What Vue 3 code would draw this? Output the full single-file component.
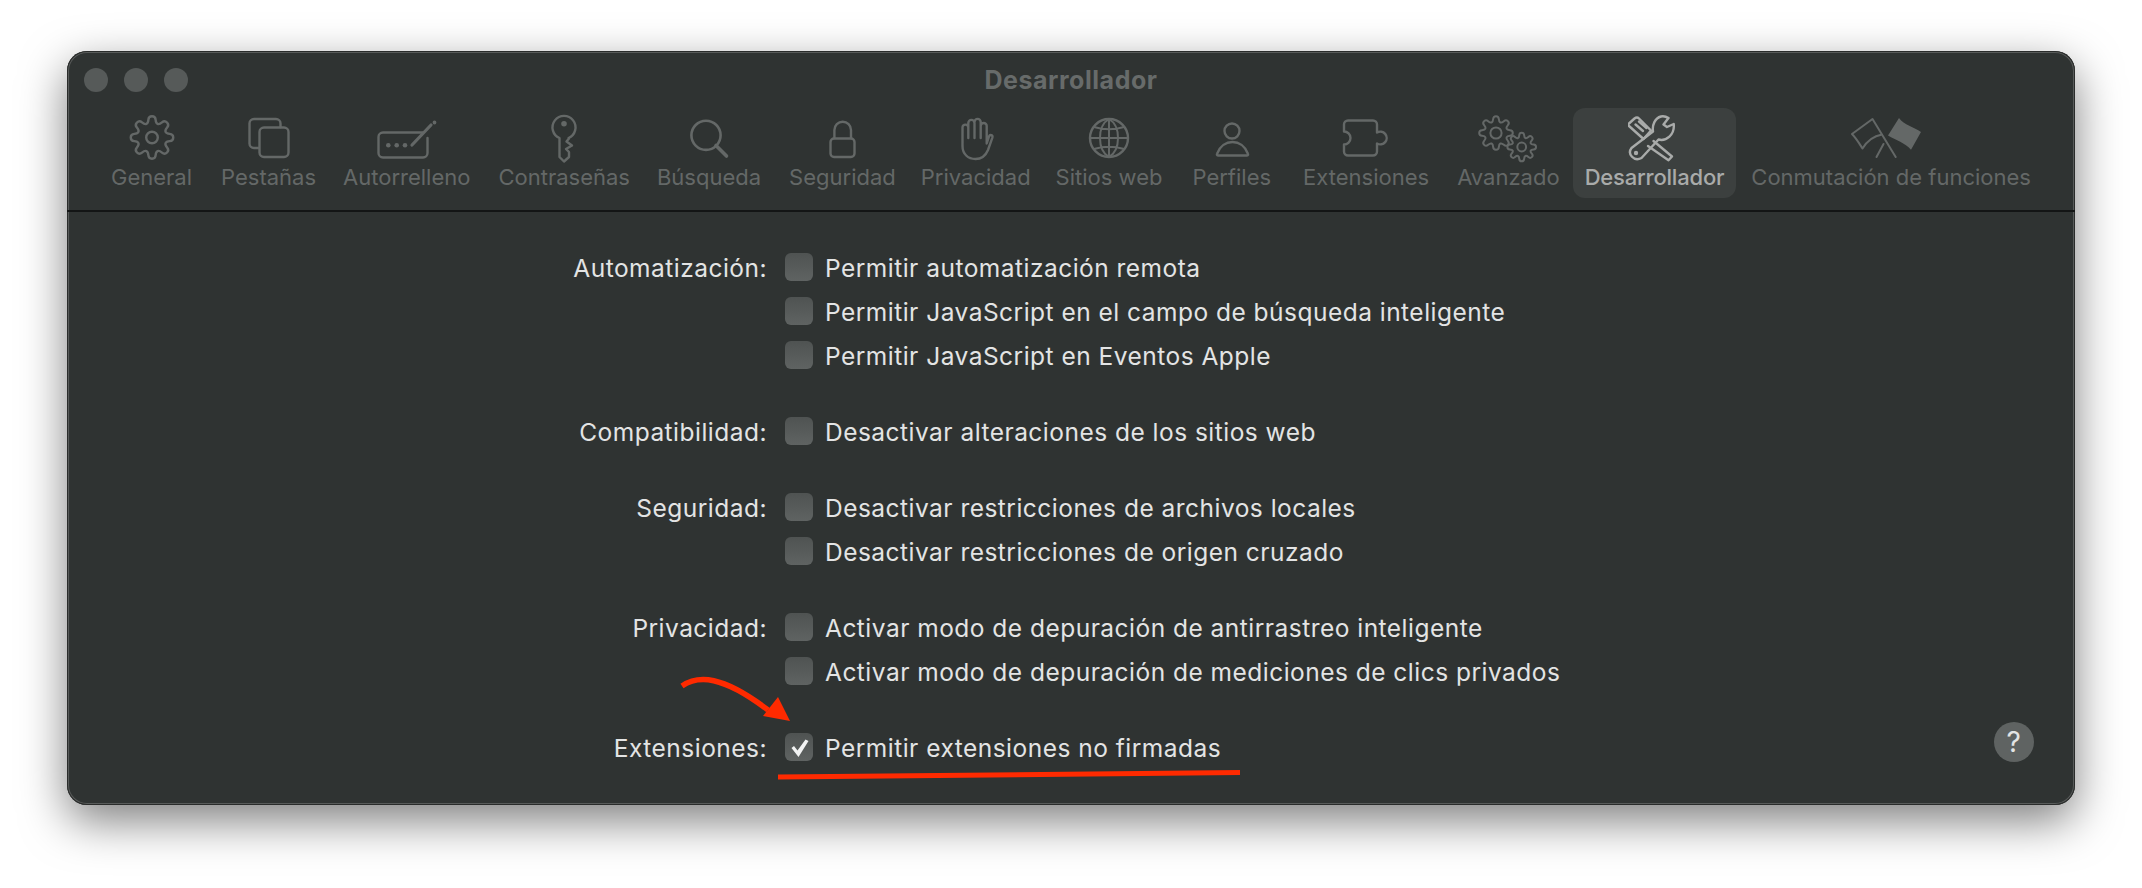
<script setup>
// rounded gear outline, drawn through midpoints so the teeth come out soft
function gear(cx, cy, ro, ri, n) {
  const step = (Math.PI * 2) / n
  const pts = []
  for (let i = 0; i < n; i++) {
    const a = -Math.PI / 2 + i * step
    for (const [r, k] of [[ri, -0.34], [ro, -0.2], [ro, 0.2], [ri, 0.34]]) {
      pts.push([cx + r * Math.cos(a + k * step), cy + r * Math.sin(a + k * step)])
    }
  }
  const mid = (p, q) => [(p[0] + q[0]) / 2, (p[1] + q[1]) / 2]
  const f = (p) => p[0].toFixed(2) + ' ' + p[1].toFixed(2)
  let d = 'M' + f(mid(pts[pts.length - 1], pts[0]))
  pts.forEach((p, i) => {
    d += ' Q' + f(p) + ' ' + f(mid(p, pts[(i + 1) % pts.length]))
  })
  return d + ' Z'
}
const circle = (cx, cy, r) => `M${cx - r} ${cy} a${r} ${r} 0 1 0 ${r * 2} 0 a${r} ${r} 0 1 0 ${-r * 2} 0 Z`

// icon paths are in page pixels; cx and w make the viewBox, ml nudges the tab like the real toolbar's uneven widths
const tabs = [
  { label: 'General', cx: 152, w: 50, paths: [{ d: gear(152, 137.5, 21.5, 14.8, 8) }, { d: circle(152, 137.5, 5.8) }] },
  { label: 'Pestañas', cx: 268.5, w: 48, ml: 1, paths: [
    { d: 'M280 127 V123.5 a4.5 4.5 0 0 0 -4.5 -4.5 H253.5 a4.5 4.5 0 0 0 -4.5 4.5 V143.5 a4.5 4.5 0 0 0 4.5 4.5 H258' },
    { d: 'M263.5 127.5 H283.5 a4.5 4.5 0 0 1 4.5 4.5 V152.5 a4.5 4.5 0 0 1 -4.5 4.5 H263.5 a4.5 4.5 0 0 1 -4.5 -4.5 V132 a4.5 4.5 0 0 1 4.5 -4.5 Z' }
  ] },
  { label: 'Autorrelleno', cx: 407, w: 64, ml: -1, paths: [
    { d: 'M423 132.5 H383 a4.5 4.5 0 0 0 -4.5 4.5 V153 a4.5 4.5 0 0 0 4.5 4.5 H423 a4.5 4.5 0 0 0 4.5 -4.5 V138' },
    { d: 'M412 145 L431 125', sw: 3.2 },
    { d: circle(434.5, 122.5, 1.9), fill: true },
    { d: circle(388.3, 145.3, 2.3), fill: true },
    { d: circle(396.7, 145.3, 2.3), fill: true },
    { d: circle(405, 145.3, 2.3), fill: true }
  ] },
  { label: 'Contraseñas', cx: 564, w: 34, paths: [
    { d: 'M559.5 138 A11.5 11.5 0 1 1 568.5 138 L569 138.5 L566.5 141.5 L572 145.5 L566 149 L569 152 V157 L564 161.5 L559.5 157 Z' },
    { d: circle(564, 123.7, 2.8), fill: true }
  ] },
  { label: 'Búsqueda', cx: 709, w: 46, ml: -1, paths: [
    { d: circle(706, 135.3, 14.6), sw: 2.6 },
    { d: 'M716 145.5 L726.5 156', sw: 3.6 }
  ] },
  { label: 'Seguridad', cx: 841, w: 32, paths: [
    { d: 'M833 138.5 H850 a3.5 3.5 0 0 1 3.5 3.5 V153.5 a3.5 3.5 0 0 1 -3.5 3.5 H833 a3.5 3.5 0 0 1 -3.5 -3.5 V142 a3.5 3.5 0 0 1 3.5 -3.5 Z' },
    { d: 'M833.4 138 V130 A8.3 8.3 0 0 1 850 130 V138' }
  ] },
  { label: 'Privacidad', cx: 976, w: 38, ml: -3, paths: [
    { d: 'M962.5 146 V127.5 a2.9 2.9 0 0 1 5.8 0 V138 M968.3 138 V123 a3.1 3.1 0 0 1 6.2 0 V138 M974.5 122 a3.1 3.1 0 0 1 6.2 0 V138 M980.7 126 a3 3 0 0 1 6 0 V143.5 L989 136.5 C990 134 993.2 135 992.3 137.8 L988 150 C985.5 156 981 159 975.5 159 C968 159 962.5 154 962.5 146' }
  ] },
  { label: 'Sitios web', cx: 1111, w: 46, ml: -3, paths: [
    { d: circle(1111, 138, 19) },
    { d: 'M1111 119 C1099 126 1099 150 1111 157 C1123 150 1123 126 1111 119 M1111 119 V157 M1092 138 H1130 M1096 127 C1106 130 1116 130 1126 127 M1096 149 C1106 146 1116 146 1126 149', sw: 2 }
  ] },
  { label: 'Perfiles', cx: 1233, w: 40, ml: 2, paths: [
    { d: circle(1233, 131, 7.5) },
    { d: 'M1219 155.5 H1248 C1249.2 155.5 1249.3 154.5 1248.8 153.5 C1246 146 1240 142 1233.5 142 C1227 142 1221 146 1218.2 153.5 C1217.7 154.5 1217.8 155.5 1219 155.5 Z' }
  ] },
  { label: 'Extensiones', cx: 1367, w: 54, ml: 4, paths: [
    { d: 'M1349 120.5 H1374 a4 4 0 0 1 4 4 V132.5 A6.4 6.4 0 1 1 1378 143.5 V151.5 a4 4 0 0 1 -4 4 H1349 a4 4 0 0 1 -4 -4 V144.5 A6.4 6.4 0 1 0 1345 131.5 V124.5 a4 4 0 0 1 4 -4 Z' }
  ] },
  { label: 'Avanzado', cx: 1507, w: 60, paths: [
    { d: gear(1495, 133, 17, 11.5, 8), sw: 2 },
    { d: circle(1495, 133, 5.6), sw: 2 },
    { d: gear(1520.7, 147, 14.5, 9.8, 8), sw: 2 },
    { d: circle(1520.7, 147, 4.4), sw: 2 }
  ] },
  { label: 'Desarrollador', cx: 1657, w: 52, active: true, ml: -3, paths: [
    { d: 'M1632 123.5 L1637.5 118.5 q2.5 -2 4.5 0 L1654 130.5 L1646.5 139 L1632 126 q-1.3 -1.2 0 -2.5 Z' },
    { d: 'M1638.5 124.5 L1646 131 M1642 121.5 L1649.5 128' },
    { d: 'M1656.5 141 L1675 156.5 L1671.5 160.3 L1651 146' },
    { d: 'M1664 116.5 C1658 118 1655 125 1656 131.5 L1634.5 148 C1630 154 1637 162 1644.5 158 L1661.5 139.5 C1669 141.5 1678 135 1676.7 124 L1670 127 L1666.5 124.5 L1671.5 118 C1669 116.5 1666.5 116 1664 116.5 Z' },
    { d: circle(1639, 153, 2.2), fill: true }
  ] },
  { label: 'Conmutación de funciones', cx: 1897, w: 80, ml: -1, paths: [
    { d: 'M1901.7 157 L1878.5 119 L1858 134 C1862 138 1865 143 1868.5 148.5 C1873 141 1880 136 1888 134.5', sw: 2 },
    { d: 'M1882.5 157 L1889.5 144', sw: 2 },
    { d: 'M1905 118 C1910 125 1920 127 1927 132 L1917 149.7 C1911 143 1902 140 1894 135.5 Z', fill: true }
  ] }
]

const sections = [
  { label: 'Automatización:', options: [
    { text: 'Permitir automatización remota' },
    { text: 'Permitir JavaScript en el campo de búsqueda inteligente' },
    { text: 'Permitir JavaScript en Eventos Apple' }
  ] },
  { label: 'Compatibilidad:', options: [{ text: 'Desactivar alteraciones de los sitios web' }] },
  { label: 'Seguridad:', options: [
    { text: 'Desactivar restricciones de archivos locales' },
    { text: 'Desactivar restricciones de origen cruzado' }
  ] },
  { label: 'Privacidad:', options: [
    { text: 'Activar modo de depuración de antirrastreo inteligente' },
    { text: 'Activar modo de depuración de mediciones de clics privados' }
  ] },
  { label: 'Extensiones:', help: true, options: [{ text: 'Permitir extensiones no firmadas', checked: true }] }
]
</script>

<template>
  <div class="page">
    <div class="window">
      <div class="titlebar">
        <div class="lights"><span></span><span></span><span></span></div>
        <div class="title">Desarrollador</div>
      </div>

      <div class="toolbar">
        <div v-for="t in tabs" :key="t.label" class="tab" :class="{ active: t.active }" :style="{ marginLeft: (t.ml || 0) + 'px' }">
          <svg :width="t.w" height="52" :viewBox="`${t.cx - t.w / 2} 112 ${t.w} 52`" fill="none" stroke="currentColor" stroke-linecap="round" stroke-linejoin="round">
            <path v-for="(p, i) in t.paths" :key="i" :d="p.d" :fill="p.fill ? 'currentColor' : 'none'" :stroke="p.fill ? 'none' : 'currentColor'" :stroke-width="p.sw || 2.4" />
          </svg>
          <span class="tab-label">{{ t.label }}</span>
        </div>
      </div>

      <div class="body">
        <div v-for="s in sections" :key="s.label" class="section">
          <div class="sec-label">{{ s.label }}</div>
          <div class="options">
            <div v-for="o in s.options" :key="o.text" class="option">
              <span class="box">
                <svg v-if="o.checked" width="28" height="28" viewBox="0 0 28 28">
                  <path d="M6.5 15 L9 13 L12.5 17.5 L20.5 6.5 L23.5 8 L13.5 24 Z" fill="#f2f3f3" />
                </svg>
              </span>
              <span class="opt-text">{{ o.text }}</span>
            </div>
          </div>
          <div v-if="s.help" class="help">?</div>
        </div>
      </div>
    </div>

    <svg class="marks" width="2142" height="888" viewBox="0 0 2142 888" fill="none">
      <path d="M682 686 C698 675 722 675 768 710" stroke="#ff2a00" stroke-width="5.5" />
      <path d="M790 721 L763 716 L778 697 Z" fill="#ff2a00" />
      <path d="M778 777 L1240 772.5" stroke="#ff2a00" stroke-width="5" />
    </svg>
  </div>
</template>

<style>
html, body { background: #fff; }
</style>

<style scoped>
.page { position: relative; width: 2142px; height: 888px; overflow: hidden; padding: 51px 0 0 67px; box-sizing: border-box; background: #fff; font-family: Inter, "Liberation Sans", sans-serif; }
.window { width: 2008px; height: 754px; box-sizing: border-box; border-radius: 20px; background: #2f3332; display: flex; flex-direction: column; box-shadow: inset 0 0 0 1px #2a2c2b, inset 0 0 0 2px #585b5a, 0 16px 46px rgba(0, 0, 0, 0.5); }
.titlebar { height: 57px; padding-top: 1px; box-sizing: border-box; display: grid; grid-template-columns: 1fr auto 1fr; align-items: center; }
.lights { display: flex; gap: 16px; padding-left: 17px; }
.lights span { width: 24px; height: 24px; border-radius: 50%; background: #565a59; }
.title { font-size: 25px; font-weight: 700; letter-spacing: 0.55px; color: #676b6a; }
.toolbar { height: 104px; box-sizing: border-box; padding-left: 32px; display: flex; gap: 4px; border-bottom: 2px solid #131515; align-items: flex-start; }
.tab { height: 90px; box-sizing: border-box; padding: 4px 12px 0; border-radius: 12px; display: flex; flex-direction: column; align-items: center; color: #646867; }
.tab-label { font-size: 22px; line-height: 26px; white-space: nowrap; }
.tab.active { background: #3c403f; color: #a9abaa; }
.tab.active .tab-label { font-weight: 500; letter-spacing: -0.2px; }
.body { padding-top: 41px; display: flex; flex-direction: column; gap: 48px; font-size: 24.5px; letter-spacing: 0.48px; color: #e3e4e4; }
.section { display: grid; grid-template-columns: 700px 1fr auto; column-gap: 18px; }
.sec-label { text-align: right; line-height: 30px; height: 28px; }
.options { display: flex; flex-direction: column; gap: 16px; }
.option { display: flex; align-items: center; gap: 12px; height: 28px; white-space: nowrap; }
.opt-text { padding-top: 2px; }
.box { width: 28px; height: 28px; border-radius: 6px; background: linear-gradient(#4f5352, #5f6362); display: block; }
.box svg { display: block; }
.help { width: 40px; height: 40px; margin: -11px 41px -1px 0; border-radius: 50%; background: #5f6362; color: #e3e4e4; font-size: 28px; line-height: 40px; text-align: center; }
.marks { position: absolute; left: 0; top: 0; pointer-events: none; }
</style>
